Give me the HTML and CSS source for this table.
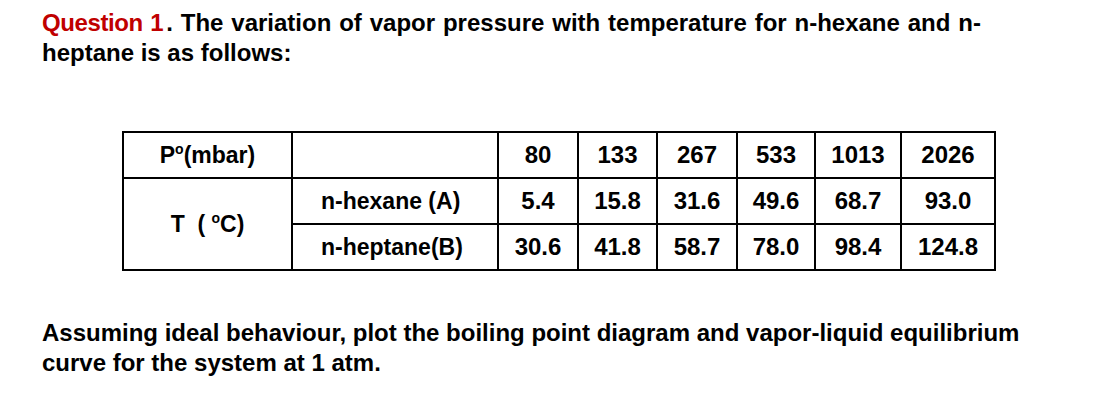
FILE: index.html
```html
<!DOCTYPE html>
<html>
<head>
<meta charset="utf-8">
<link rel="stylesheet" href="styles.css">
</head>
<body>
<div class="page">
  <p class="text"><span class="wide"><span class="qnum">Question 1</span>. The variation of vapor pressure with temperature for n-hexane and n-</span><br>heptane is as follows:</p>
  <table class="data">
    <colgroup>
      <col class="c1"><col class="c2">
      <col class="n80"><col class="n133"><col class="n267"><col class="n533"><col class="n1013"><col class="n2026">
    </colgroup>
    <tr>
      <td class="label">P<sup class="deg">o</sup>(mbar)</td>
      <td></td>
      <td>80</td><td>133</td><td>267</td><td>533</td><td>1013</td><td>2026</td>
    </tr>
    <tr>
      <td class="label" rowspan="2">T&nbsp; (&nbsp;<sup class="deg">o</sup>C)</td>
      <td class="label name">n-hexane (A)</td>
      <td>5.4</td><td>15.8</td><td>31.6</td><td>49.6</td><td>68.7</td><td>93.0</td>
    </tr>
    <tr>
      <td class="label name">n-heptane(B)</td>
      <td>30.6</td><td>41.8</td><td>58.7</td><td>78.0</td><td>98.4</td><td>124.8</td>
    </tr>
  </table>
  <p class="text second">Assuming ideal behaviour, plot the boiling point diagram and vapor-liquid equilibrium<br>curve for the system at 1 atm.</p>
</div>
</body>
</html>
```

FILE: styles.css
```css
html, body {
  margin: 0;
  padding: 0;
  background: #ffffff;
}
.page {
  padding: 8px 0 0 42px;
  font-family: "Liberation Sans", Arial, sans-serif;
  font-weight: bold;
  color: #000;
}
.text {
  margin: 0;
  font-size: 24px;
  line-height: 30px;
}
.wide {
  word-spacing: 1.2px;
}
.qnum {
  color: #c00000;
  letter-spacing: -0.4px;
  margin-right: 3px;
}
.second {
  margin-top: 47px;
}
.data {
  margin: 63px 0 0 80px;
  border-collapse: collapse;
  table-layout: fixed;
  width: 872px;
  font-size: 24px;
}
.data td {
  border: 2px solid #000;
  text-align: center;
  padding: 0;
  height: 44px;
}
.data td.label {
  font-size: 23px;
}
.data td.name {
  text-align: left;
  padding-left: 28px;
}
.c1 { width: 169px; }
.c2 { width: 206px; }
.n80 { width: 80px; }
.n133 { width: 79px; }
.n267 { width: 80px; }
.n533 { width: 78px; }
.n1013 { width: 86px; }
.n2026 { width: 94px; }
.deg {
  font-size: 14px;
  vertical-align: 9px;
  line-height: 0;
}
```
